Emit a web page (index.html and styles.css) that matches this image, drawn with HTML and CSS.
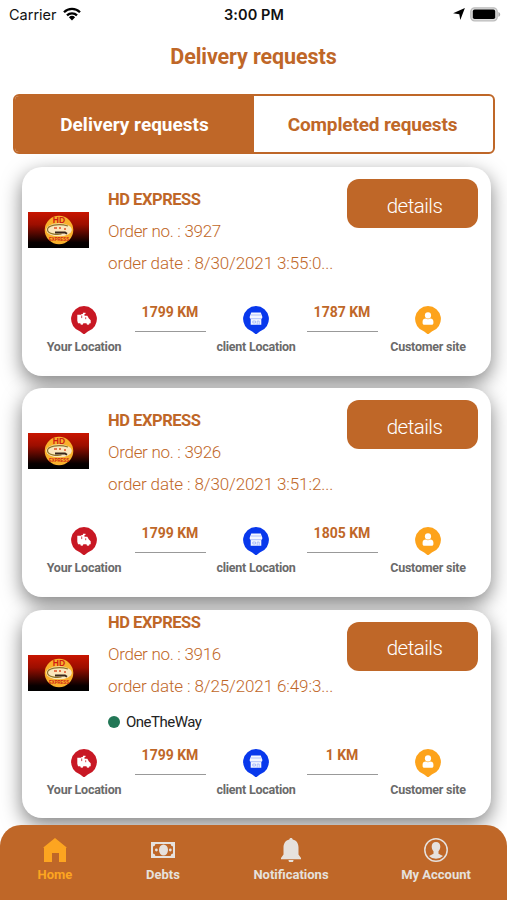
FILE: index.html
```html
<!DOCTYPE html>
<html lang="en">
<head>
<meta charset="utf-8">
<title>Delivery requests</title>
<link rel="stylesheet" href="styles.css">
</head>
<body>
<svg class="sprite" aria-hidden="true">
  <defs>
    <linearGradient id="red-black" x1="0" y1="0" x2="0" y2="1">
      <stop offset="0" stop-color="#c91500"/><stop offset=".35" stop-color="#9c0e00"/><stop offset=".85" stop-color="#080000"/><stop offset="1" stop-color="#000"/>
    </linearGradient>
  </defs>
  <symbol id="pin-driver" viewBox="0 0 26 28">
    <path d="M13 0a13 13 0 0 1 3.800 25.400L13 28.500l-3.800-3.100A13 13 0 0 1 13 0z" fill="#c81824"/>
    <path d="M6.300 8.800h4V8h1.600V6.700h2.600V8h-1v1.800h2.800l1.600 2.800 1.800 1.600v3h-1.200a1.500 1.500 0 0 1-3 0h-3.200a1.500 1.500 0 0 1-3 0H7l-.7-2.500z" fill="#fff"/>
    <path d="M10.700 9.500v2.600m4 -.8v1.900" stroke="#c81824" stroke-width=".8"/>
  </symbol>
  <symbol id="pin-store" viewBox="0 0 26 28">
    <path d="M13 0a13 13 0 0 1 3.800 25.400L13 28.500l-3.800-3.100A13 13 0 0 1 13 0z" fill="#0838ec"/>
    <path d="M8.200 6.500h9.600l1.500 4.200a1.800 1.800 0 0 1-1 2v6.100H7.700v-6.100a1.800 1.800 0 0 1-1-2z" fill="#f4f7ff"/>
    <path d="M8 9h10M8 12.700h10M9.800 15h2.700v2H9.800zm4.400 3.800V15h2v3.800" fill="none" stroke="#9eb3f8" stroke-width=".8"/>
  </symbol>
  <symbol id="pin-person" viewBox="0 0 26 28">
    <path d="M13 0a13 13 0 0 1 3.800 25.400L13 28.500l-3.800-3.100A13 13 0 0 1 13 0z" fill="#fda31b"/>
    <circle cx="13" cy="9.400" r="3.100" fill="#fff"/>
    <path d="M7.600 17v-1.500c0-2 1.400-3 3-3a4.500 4.500 0 0 0 4.800 0c1.700 0 3 1 3 3V17c0 1-.6 1.800-1.700 1.800H9.300c-1 0-1.700-.8-1.700-1.800z" fill="#fff"/>
  </symbol>
</svg>

<header class="status">
  <div class="status-left"><span class="carrier">Carrier</span>
    <svg class="wifi" viewBox="0 0 18 14" fill="none" stroke="#000" stroke-width="2.300"><path d="M1 5.200a11.400 11.400 0 0 1 16 0M4 8.400a7.100 7.100 0 0 1 10 0"/><path d="M5.900 10.300a4.500 4.500 0 0 1 6.200 0L9 13.600z" fill="#000" stroke="none"/></svg>
  </div>
  <span class="clock">3:00 PM</span>
  <div class="status-right">
    <svg class="arrow" viewBox="0 0 12 12"><path d="M11.900.1 7.300 11.900 6.300 6.200.1 5.300z" fill="#000"/></svg>
    <svg class="battery" viewBox="0 0 31 15"><rect x=".8" y=".8" width="26.400" height="13" rx="3.800" fill="#ddd" stroke="#bcbcbc" stroke-width="1.300"/><rect x="2.800" y="2.600" width="22.400" height="9.400" rx="1.800"/><path d="M28.400 5c2.400.8 2.400 4 0 4.800z" fill="#aaa"/></svg>
  </div>
</header>

<h1 class="title"><span>Delivery requests</span></h1>
<nav class="tabs">
  <a class="tab tab-on"><span>Delivery requests</span></a>
  <a class="tab tab-off"><span>Completed requests</span></a>
</nav>

<main class="list" id="list"></main>

<footer class="bar">
  <a class="item item-home"><svg viewBox="0 0 24 24"><path d="M12 0 24 9.800h-1V24h-7v-9H9v9H1V9.800H0z" fill="currentColor"/></svg><span>Home</span></a>
  <a class="item item-debts"><svg viewBox="0 0 24 24"><path fill-rule="evenodd" d="M0 4h24v16H0zM4.400 6A2.600 2.600 0 0 1 2 8.400v7.200A2.600 2.600 0 0 1 4.400 18h15.200a2.600 2.600 0 0 1 2.400-2.400V8.400A2.600 2.600 0 0 1 19.600 6z" fill="currentColor"/><ellipse cx="12.500" cy="12" rx="4.500" ry="5.500" fill="currentColor"/><circle cx="5.400" cy="12" r="1.400" fill="currentColor"/><circle cx="19.300" cy="12" r="1.400" fill="currentColor"/></svg><span>Debts</span></a>
  <a class="item item-bell"><svg viewBox="0 0 24 24"><path d="M12 0c1 0 1.700.6 1.700 1.600C17.600 2.500 19.500 5.600 19.500 9.500v7l2.500 3.500v1.200H2V20l2.500-3.500v-7c0-3.900 2-7 5.800-7.900C10.300.6 11 0 12 0zM9.500 22h5a2.500 2.500 0 0 1-5 0z" fill="currentColor"/></svg><span>Notifications</span></a>
  <a class="item item-user"><svg viewBox="0 0 24 24"><circle cx="12" cy="12" r="11.200" fill="none" stroke="currentColor" stroke-width="1.500"/><path d="M12 4c2.800 0 4.300 1.800 4.300 4.600 0 2-.7 3.500-1.800 4.700v2.400l4.500 2.200a10 10 0 0 1-14 0l4.500-2.200v-2.400c-1.100-1.200-1.800-2.700-1.800-4.700C7.700 5.800 9.200 4 12 4z" fill="currentColor"/></svg><span>My Account</span></a>
</footer>
<script src="app.js"></script>
</body>
</html>
```
FILE: styles.css
```css
* { box-sizing: border-box; }
body { margin: 0; width: 507px; height: 900px; overflow: hidden; display: flex; flex-direction: column; background: #fff; color: #bf6728; font-family: Roboto, "Open Sans", sans-serif; }
.sprite { position: absolute; width: 0; height: 0; }
.brand-top, .brand-bottom { font-family: "Liberation Sans", sans-serif; font-weight: bold; text-anchor: middle; fill: #cf1d12; }
.brand-top { font-size: 8.500px; }
.brand-bottom { font-size: 4.800px; }

.status { height: 28px; flex: none; display: grid; grid-template-columns: 1fr auto 1fr; align-items: center; padding: 0 6px 0 9px; color: #111; font-family: Inter, sans-serif; font-size: 14.500px; }
.status-left, .status-right { display: flex; align-items: center; }
.status-left { gap: 6px; }
.status-right { justify-content: flex-end; gap: 5px; }
.wifi { width: 18px; height: 14px; }
.arrow { width: 12px; height: 12px; }
.battery { width: 31px; height: 15px; }
.clock { font-weight: 600; margin-right: 2px; letter-spacing: .1px; }

.title { flex: none; margin: 0; height: 66px; padding-bottom: 10px; display: flex; align-items: center; justify-content: center; font-size: 21.500px; font-weight: 700; letter-spacing: -.1px; }
.tabs { flex: none; display: flex; width: 482px; height: 60px; margin-left: 13px; border: 2.500px solid #bf6728; border-radius: 6px; overflow: hidden; }
.tab { width: 50%; display: flex; align-items: center; justify-content: center; padding-top: 1px; font-size: 19px; font-weight: 700; }
.tab-on { background: #bf6728; color: #fff; }
.tab-off { letter-spacing: -.15px; padding-right: 2px; }

.list { flex: 1; min-height: 0; display: flex; flex-direction: column; gap: 12.700px; padding: 13px 16.500px 0 22px; }
.card { flex: none; height: 208.600px; border-radius: 20px; background: #fff; box-shadow: 0 7px 20px rgba(0,0,0,.5); }
.top { display: grid; grid-template-columns: 61px 226px 131px; grid-template-rows: 128px; column-gap: 19px; height: 128px; padding-left: 6px; align-items: center; }
.brand { width: 61px; height: 36px; margin-top: -2px; }
.info { min-width: 0; font-size: 17px; line-height: 32px; white-space: nowrap; font-weight: 300; letter-spacing: -.3px; }
.info p, .info h2 { margin: 0; }
.info .date { letter-spacing: -.11px; }
.info h2 { height: 32px; font-size: 16.500px; line-height: 34px; font-weight: 700; letter-spacing: -.45px; }
.state { display: flex; align-items: center; gap: 6px; height: 40px; color: #222; font-size: 15px; font-weight: 400; letter-spacing: -.5px; }
.dot { width: 12px; height: 12px; border-radius: 50%; background: #227756; }
.details { align-self: start; width: 131px; margin: 12px 0 0 -6px; height: 49px; padding: 4px 0 0 4px; border-radius: 12px; background: #bf6728; color: #fff; display: flex; align-items: center; justify-content: center; font-size: 20.500px; font-weight: 300; letter-spacing: -.5px; }
.route { display: grid; grid-template-columns: repeat(5, 86px); height: 70px; padding: 10px 0 0 19px; }
.stop, .leg { display: flex; flex-direction: column; align-items: center; white-space: nowrap; }
.stop svg { width: 26px; height: 28px; margin-top: 1px; overflow: visible; }
.stop span { color: #6a6a6a; font-size: 12.500px; font-weight: 700; line-height: 18px; margin-top: 4px; letter-spacing: -.25px; }
.leg { font-size: 14px; font-weight: 700; line-height: 14px; }
.leg::after { content: ""; width: 71px; height: 1px; margin-top: 12px; background: #999; }

.bar { position: relative; flex: none; height: 75px; display: flex; border-radius: 21px 21px 0 0; background: #bf6728; color: #e6e1dd; }
.item { display: flex; flex-direction: column; align-items: center; padding-top: 13px; font-size: 13px; line-height: 18px; font-weight: 700; }
.item svg { width: 24px; height: 24px; margin-bottom: 4px; }
.item-home { width: 110px; color: #fda520; }
.item-debts { width: 106px; }
.item-bell { width: 150px; }
.item-user { width: 140px; }
```
FILE: app.js
```js
const orders = [
  { no: 3927, date: "8/30/2021 3:55:0...", leg: "1787 KM" },
  { no: 3926, date: "8/30/2021 3:51:2...", leg: "1805 KM" },
  { no: 3916, date: "8/25/2021 6:49:3...", leg: "1 KM", state: "OneTheWay" }
];
const brand = `<svg class="brand" viewBox="0 0 61 36">
  <rect width="61" height="36" fill="url(#red-black)"/>
  <circle cx="31" cy="18" r="14.300" fill="#f9b02c"/>
  <ellipse cx="31" cy="17.800" rx="12.800" ry="6.500" fill="#fae6bd"/>
  <path d="M40 14C30 11 19 13.500 19.500 18c.5 4 9 5 14 4" fill="none" stroke="#8b7228" stroke-width="1.200"/>
  <path d="M26 16h3m2 0h2m3 1h2" stroke="#e1522a" stroke-width="1.300"/>
  <path d="M27 20.500h10l2 1.300" fill="none" stroke="#39261b" stroke-width="1.800"/>
  <text x="31" y="11" class="brand-top">HD</text>
  <text x="31" y="28.500" class="brand-bottom" textLength="20" lengthAdjust="spacingAndGlyphs">EXPRESS</text>
</svg>`;
const stop = (icon, label) => `<div class="stop"><svg><use href="#${icon}"/></svg><span>${label}</span></div>`;
const leg = text => `<div class="leg"><span>${text}</span></div>`;
document.getElementById("list").innerHTML = orders.map(o => `
<article class="card">
  <div class="top">
    ${brand}
    <div class="info"><h2><span>HD EXPRESS</span></h2><p><span>Order no. : ${o.no}</span></p><p class="date"><span>order date : ${o.date}</span></p>
      ${o.state ? `<div class="state"><i class="dot"></i><span>${o.state}</span></div>` : ""}</div>
    <a class="details"><span>details</span></a>
  </div>
  <div class="route">${stop("pin-driver", "Your Location")}${leg("1799 KM")}${stop("pin-store", "client Location")}${leg(o.leg)}${stop("pin-person", "Customer site")}</div>
</article>`).join("");
```
